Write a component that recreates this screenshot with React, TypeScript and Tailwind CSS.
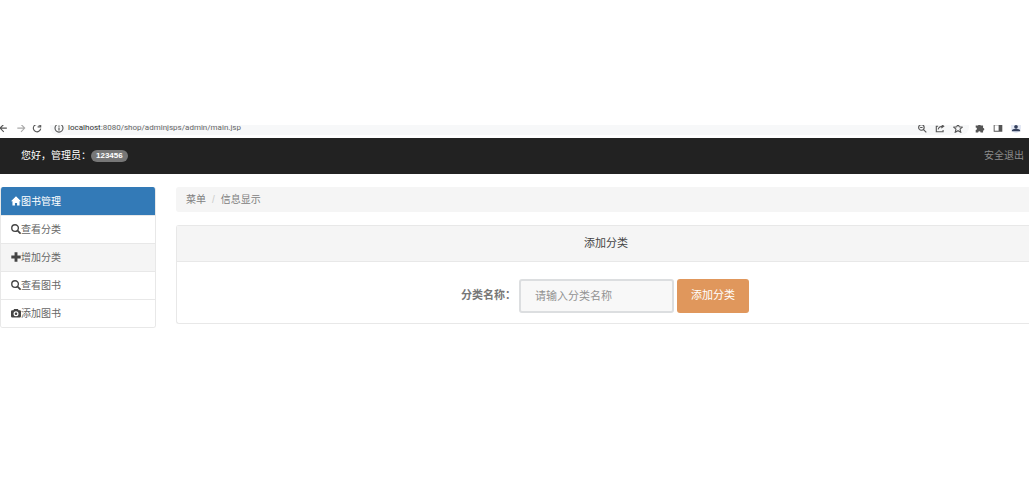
import type { ReactNode } from 'react'

function Glyph({ children }: { children: ReactNode }) {
  return (
    <svg viewBox="0 0 16 16" className="mb-px h-2.5 w-2.5 shrink-0 text-[#444]" fill="currentColor" aria-hidden="true">
      {children}
    </svg>
  )
}

// Toolbar icons run under the top edge of the bar, so the viewBox starts lower
function BarIcon({ children }: { children: ReactNode }) {
  return (
    <svg
      viewBox="0 3 16 13"
      className="h-2 w-2.5 shrink-0"
      fill="none"
      stroke="currentColor"
      strokeWidth="1.8"
      aria-hidden="true"
    >
      {children}
    </svg>
  )
}

const search = (
  <>
    <circle cx="6.5" cy="6.5" r="5.3" fill="none" stroke="currentColor" strokeWidth="2.2" />
    <path d="M10.500 10.500l4 4" stroke="currentColor" strokeWidth="2.8" strokeLinecap="round" />
  </>
)

const menu = [
  { label: '查看分类', icon: search },
  { label: '增加分类', icon: <path d="M5.7 0.500h4.600v5.200h5.200v4.600h-5.200v5.200H5.700v-5.200H0.500V5.700h5.200z" />, active: true },
  { label: '查看图书', icon: search },
  {
    label: '添加图书',
    icon: (
      <path
        fillRule="evenodd"
        d="M5 1.500h6l1.200 2H14a2 2 0 012 2V13a2 2 0 01-2 2H2a2 2 0 01-2-2V5.500a2 2 0 012-2h1.800zM8 5a4 4 0 100 8 4 4 0 000-8zm0 2a2 2 0 110 4 2 2 0 010-4z"
      />
    ),
  },
]

function BrowserBar() {
  return (
    <div className="flex h-[13px] items-start bg-white text-[#555]">
      <div className="flex w-[50px] shrink-0 justify-between pr-2">
        <BarIcon><path d="M11 8H0M6 2L0 8l6 6" /></BarIcon>
        <span className="flex text-[#aaa]"><BarIcon><path d="M2 8h12M8 2l6 6-6 6" /></BarIcon></span>
        <BarIcon><path d="M12.500 4A6 6 0 1014 9M14 1v5H9" /></BarIcon>
      </div>
      <div className="flex h-2.5 flex-1 items-start justify-between rounded-b-lg bg-[#f7f8f9] pl-1 pr-1.5">
        <div className="flex items-start gap-1">
          <BarIcon>
            <circle cx="8" cy="8" r="6.5" />
            <path d="M8 7v5M8 4v2" />
          </BarIcon>
          <span className="font-[Roboto,sans-serif] text-[8px] leading-[6px] text-[#666]">
            <span className="text-[#333]">localhost</span>:8080/shop/adminjsps/admin/main.jsp
          </span>
        </div>
        <div className="flex gap-2">
          <BarIcon><circle cx="7" cy="7" r="4.5" /><path d="M10 10l5 5M5 7h4" /></BarIcon>
          <BarIcon><path d="M5 5H2v9h11v-3M5 10c1-4 4-5 8-5M10 2l4 3-4 3" /></BarIcon>
          <BarIcon><path d="M8 1l2 5 5 .5-3.700 3.300 1.200 5L8 12.200l-4.500 2.600 1.200-5L1 6.500 6 6z" /></BarIcon>
        </div>
      </div>
      <div className="flex shrink-0 gap-2 pl-1.5 pr-2">
        <BarIcon>
          <path fill="currentColor" stroke="none" d="M1 4h4a2 2 0 014 0h4v4a2 2 0 010 4v3H9a2 2 0 00-4 0H1v-4a2 2 0 000-4z" />
        </BarIcon>
        <BarIcon>
          <path fill="currentColor" stroke="none" fillRule="evenodd" d="M1 2h14v12H1zm1.500 1.500v9H9v-9z" />
        </BarIcon>
        <span className="flex rounded-b-full bg-[#e3e8f4] text-[#34405c]">
          <BarIcon>
            <g fill="currentColor" stroke="none">
              <circle cx="8" cy="6" r="3" />
              <path d="M1 13c0-5 14-5 14 0z" />
            </g>
          </BarIcon>
        </span>
      </div>
    </div>
  )
}

export default function App() {
  return (
    <div className="min-h-screen bg-white pt-[125px] font-['Liberation_Sans','Noto_Sans_CJK_SC',sans-serif] text-[10px] text-[#666]">
      <BrowserBar />

      {/* Top navigation */}
      <nav className="flex h-9 items-center justify-between bg-[#222] pb-px pl-[21px] pr-[5px]">
        <div className="flex items-center text-white">
          您好，管理员：
          <span className="rounded-full bg-[#777] px-[5px] text-[8px] font-bold leading-3">123456</span>
        </div>
        <a href="#" className="text-[#8d8d8d]">安全退出</a>
      </nav>

      <div className="flex items-start gap-5 pt-[13px]">
        {/* Sidebar */}
        <aside className="w-[156px] shrink-0 overflow-hidden rounded-[3px] border border-t-0 border-[#e8e8e8]">
          <a href="#" className="flex h-7 items-center bg-[#337ab7] px-2.5 text-white">
            <svg viewBox="0 0 16 16" className="mb-px h-2.5 w-2.5 shrink-0" fill="currentColor" aria-hidden="true">
              <path d="M8 0.500l8 8h-2.300V15H9.700v-4H6.300v4h-4V8.500H0z" />
            </svg>
            图书管理
          </a>
          {menu.map(({ label, icon, active }) => (
            <a
              key={label}
              href="#"
              className={`flex h-7 items-center border-t border-[#e8e8e8] px-2.5 ${active ? 'bg-[#f5f5f5]' : 'bg-white'}`}
            >
              <Glyph>{icon}</Glyph>
              {label}
            </a>
          ))}
        </aside>

        <main className="min-w-0 flex-1">
          <nav className="mb-[13px] flex h-[25px] items-center rounded-l-[3px] bg-[#f5f5f5] px-2.5 text-[#808080]">
            <span>菜单</span>
            <span className="px-1.5 text-[#ccc]">/</span>
            <span>信息显示</span>
          </nav>

          {/* Add category panel */}
          <section className="rounded-l-[3px] border border-r-0 border-[#e8e8e8]">
            <h1 className="flex h-9 items-center justify-center border-b border-[#e8e8e8] bg-[#f5f5f5] pl-1.5 text-[11px] text-[#444]">
              添加分类
            </h1>
            <form
              className="flex h-[61px] items-center justify-center pl-1 pt-1.5 text-[11px]"
              onSubmit={(e) => e.preventDefault()}
            >
              <label htmlFor="category" className="mr-[3px] font-bold text-[#777]">分类名称：</label>
              <input
                id="category"
                type="text"
                placeholder="请输入分类名称"
                className="mr-[3px] h-[34px] w-[155px] rounded-[3px] border-2 border-[#dcdee0] bg-[#f8f8f8] px-3.5 outline-none placeholder:text-[#929292]"
              />
              <button type="submit" className="h-[34px] rounded-[3px] bg-[#e0975c] px-3.5 text-white">
                添加分类
              </button>
            </form>
          </section>
        </main>
      </div>
    </div>
  )
}
